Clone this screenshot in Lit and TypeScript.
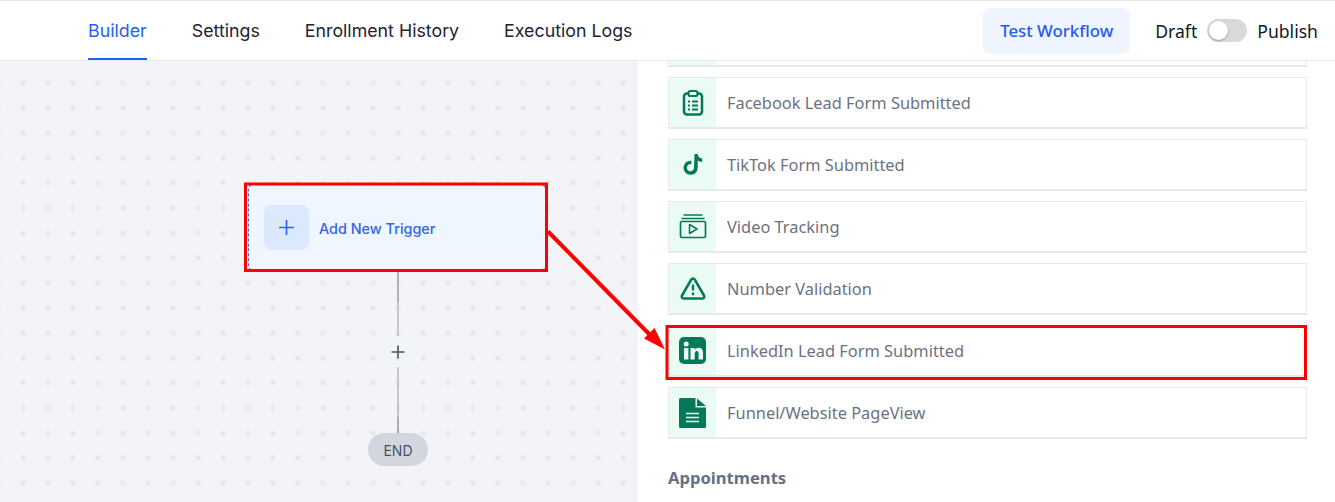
import { LitElement, html, css, svg } from "lit";
import { customElement } from "lit/decorators.js";

const icons = {
  form: svg`<rect x="5" y="4.500" width="18" height="21" rx="3" fill="none" stroke="currentColor" stroke-width="2.500"/><rect x="9.500" y="2" width="9" height="5" rx="2" fill="#e9fbf3" stroke="currentColor" stroke-width="2.200"/><path d="M9 12.500h2M9 16.500h2M9 20.500h2M13 12.500h6M13 16.500h6M13 20.500h6" stroke="currentColor" stroke-width="2" fill="none"/>`,
  tiktok: svg`<path d="M15.500 3h3.200c.3 2.600 1.900 4.300 4.500 4.600v3.300c-1.700 0-3.200-.5-4.500-1.400v7.300a7.100 7.100 0 1 1-6.400-7.100v3.500a3.600 3.600 0 1 0 2.700 3.500z" fill="currentColor"/>`,
  video: svg`<path d="M4.500 2h19M2.500 5.500h23" stroke="currentColor" stroke-width="1.700" fill="none"/><rect x="1.500" y="8.500" width="25" height="16" rx="1.500" fill="none" stroke="currentColor" stroke-width="1.700"/><path d="M10.500 11.500l7.500 4.500-7.500 4.500z" fill="none" stroke="currentColor" stroke-width="1.500" stroke-linejoin="round"/>`,
  warning: svg`<path d="M14 3.500c-.8 0-1.400.4-1.800 1.100L3 20.500c-.8 1.500.2 3 1.800 3h18.400c1.600 0 2.600-1.500 1.800-3L15.800 4.600c-.4-.7-1-1.100-1.800-1.100z" fill="none" stroke="currentColor" stroke-width="2.600" stroke-linejoin="round"/><path d="M14 9.500v6" stroke="currentColor" stroke-width="2.400" fill="none"/><circle cx="14" cy="19" r="1.400" fill="currentColor"/>`,
  linkedin: svg`<rect x="0" y="0" width="27" height="27" rx="5" fill="currentColor"/><circle cx="7.200" cy="7" r="2.500" fill="#e9fbf3"/><path d="M5 11h4.400v11.500H5zM11.500 11h4.200v1.700c.8-1.200 2.200-2 4-2 3.300 0 4.300 2.100 4.300 5.200v6.600h-4.400v-5.800c0-1.600-.4-2.600-1.800-2.600s-2.100 1-2.100 2.600v5.800h-4.200z" fill="#e9fbf3"/>`,
  file: svg`<path d="M1.500 0H16.500V9.500H27V28.500A1.500 1.500 0 0 1 25.500 30H1.500A1.500 1.500 0 0 1 0 28.500V1.500A1.500 1.500 0 0 1 1.500 0z" fill="currentColor"/><path d="M18 0.500L27 8H18z" fill="currentColor"/><path d="M7 15.500h13M7 19.500h13M7 23.500h13" stroke="#e9fbf3" stroke-width="1.700" fill="none"/>`,
};

const items = [
  { label: "Facebook Lead Form Submitted", icon: icons.form, w: 28, h: 28 },
  { label: "TikTok Form Submitted", icon: icons.tiktok, w: 28, h: 28 },
  { label: "Video Tracking", icon: icons.video, w: 28, h: 28 },
  { label: "Number Validation", icon: icons.warning, w: 28, h: 28 },
  { label: "LinkedIn Lead Form Submitted", icon: icons.linkedin, w: 27, h: 27 },
  { label: "Funnel/Website PageView", icon: icons.file, w: 27, h: 30 },
];

@customElement("app-root")
export class AppRoot extends LitElement {
  static styles = css`
    :host {
      display: block;
      width: 1335px;
      height: 502px;
      overflow: hidden;
      position: relative;
      background: #fff;
      font-family: Inter, "Liberation Sans", sans-serif;
    }
    .header {
      box-sizing: border-box;
      height: 61px;
      display: flex;
      align-items: stretch;
      border-top: 1px solid #e9eaee;
      border-bottom: 1px solid #e9eaee;
      padding-left: 88px;
      padding-right: 17px;
    }
    .tabs {
      display: flex;
      gap: 45px;
      flex: 1;
    }
    .tab {
      font-size: 17.800px;
      font-weight: 400;
      color: #1d2433;
      line-height: 60px;
      height: 59px;
      box-sizing: border-box;
    }
    .tab.active {
      color: #1f62f2;
      border-bottom: 2px solid #1f62f2;
    }
    .actions {
      display: flex;
      align-items: center;
      font-family: "Noto Sans", sans-serif;
      font-size: 17.600px;
      color: #101828;
    }
    .test {
      box-sizing: border-box;
      width: 147px;
      height: 45px;
      margin-top: -1px;
      margin-right: 25px;
      border-radius: 8px;
      background: #f0f4ff;
      color: #1f5bf0;
      font-size: 16.800px;
      font-weight: 500;
      display: flex;
      align-items: center;
      justify-content: center;
      box-shadow: 0 1px 2px rgba(16, 24, 40, 0.05);
    }
    .switch {
      width: 40px;
      height: 23px;
      margin: 0 10px;
      border-radius: 12px;
      background: #d9d9d9;
      position: relative;
    }
    .knob {
      position: absolute;
      left: 2px;
      top: 2px;
      width: 19px;
      height: 19px;
      border-radius: 50%;
      background: #fff;
      box-shadow: 0 1px 2px rgba(0, 0, 0, 0.3);
    }
    .body {
      display: flex;
      height: 441px;
    }
    .canvas {
      position: relative;
      width: 638px;
      flex: none;
      background-color: #f2f4f8;
      background-image: radial-gradient(circle, #e7e8eb 2.300px, transparent 2.900px);
      background-size: 25px 25px;
      background-position: 10.500px 9.500px;
    }
    .trigger {
      position: absolute;
      left: 248px;
      top: 123px;
      width: 298px;
      height: 87px;
      box-sizing: border-box;
      display: flex;
      align-items: center;
      gap: 10px;
      padding-left: 15px;
      background: #eff6ff;
      border: 1px dashed #3366e0;
      border-radius: 6px;
      color: #3366e0;
      font-size: 14.400px;
      font-weight: 500;
    }
    .plus-box {
      width: 45px;
      height: 45px;
      margin-top: -1px;
      border-radius: 8px;
      background: #dbe9ff;
      display: flex;
      align-items: center;
      justify-content: center;
    }
    .trigger span {
      margin-top: 2px;
    }
    .wire {
      position: absolute;
      left: 397px;
      width: 2px;
    }
    .wire.a {
      top: 211px;
      height: 64px;
      background: linear-gradient(#b0b3b9 0 30px, #c4c7cd 30px);
    }
    .wire.b {
      top: 306px;
      height: 66px;
      background: linear-gradient(#c4c7cd 0 50px, #a9adb5 50px);
    }
    .add {
      position: absolute;
      left: 391px;
      top: 284px;
    }
    .end {
      position: absolute;
      left: 368px;
      top: 372px;
      width: 60px;
      height: 33px;
      padding-top: 1px;
      box-sizing: border-box;
      border-radius: 17px;
      background: #d3d6de;
      color: #475467;
      font-size: 14px;
      display: flex;
      align-items: center;
      justify-content: center;
    }
    .panel {
      flex: 1;
      overflow: hidden;
      padding: 0 28px 0 30px;
      font-family: "Noto Sans", sans-serif;
    }
    .list {
      display: flex;
      flex-direction: column;
      gap: 10px;
      margin-top: -46px;
    }
    .item {
      box-sizing: border-box;
      height: 52px;
      display: flex;
      align-items: center;
      border: 1.500px solid #e8e9ed;
      border-bottom-width: 2px;
      background: #fff;
      color: #6b7280;
      font-size: 16.400px;
    }
    .icon {
      width: 47px;
      height: 100%;
      flex: none;
      margin-right: 11px;
      background: #e9fbf3;
      color: #047857;
      display: flex;
      align-items: center;
      justify-content: center;
    }
    h3 {
      margin: 27px 0 0;
      font-size: 16.600px;
      font-weight: 700;
      color: #667085;
    }
    .marks {
      position: absolute;
      left: 0;
      top: 0;
      pointer-events: none;
    }
  `;

  render() {
    return html`
      <div class="header">
        <div class="tabs">
          <div class="tab active">Builder</div>
          <div class="tab">Settings</div>
          <div class="tab">Enrollment History</div>
          <div class="tab">Execution Logs</div>
        </div>
        <div class="actions">
          <div class="test">Test Workflow</div>
          <span>Draft</span>
          <div class="switch"><div class="knob"></div></div>
          <span>Publish</span>
        </div>
      </div>
      <div class="body">
        <div class="canvas">
          <div class="trigger">
            <div class="plus-box">
              <svg width="15" height="15" viewBox="0 0 15 15">
                <path d="M7.500 0v15M0 7.500h15" stroke="#3366e0" stroke-width="1.700" fill="none" />
              </svg>
            </div>
            <span>Add New Trigger</span>
          </div>
          <div class="wire a"></div>
          <svg class="add" width="14" height="14" viewBox="0 0 14 14">
            <path d="M7 0.500v13M0.500 7h13" stroke="#475467" stroke-width="1.600" fill="none" />
          </svg>
          <div class="wire b"></div>
          <div class="end">END</div>
        </div>
        <div class="panel">
          <div class="list">
            <div class="item"><div class="icon"></div></div>
            ${items.map(
              (i) => html`
                <div class="item">
                  <div class="icon">
                    <svg width=${i.w} height=${i.h} viewBox="0 0 ${i.w} ${i.h}">${i.icon}</svg>
                  </div>
                  <span>${i.label}</span>
                </div>
              `
            )}
          </div>
          <h3>Appointments</h3>
        </div>
      </div>
      <svg class="marks" width="1335" height="502" viewBox="0 0 1335 502">
        <rect x="245.500" y="184" width="301" height="86.500" fill="none" stroke="#fe0000" stroke-width="3" />
        <rect x="667" y="326.500" width="638.500" height="52" fill="none" stroke="#fe0000" stroke-width="3" />
        <path d="M548 231.500L652 337" stroke="#fe0000" stroke-width="4" fill="none" />
        <path d="M665 349.500L644 338.500L654.500 328z" fill="#fe0000" />
      </svg>
    `;
  }
}
